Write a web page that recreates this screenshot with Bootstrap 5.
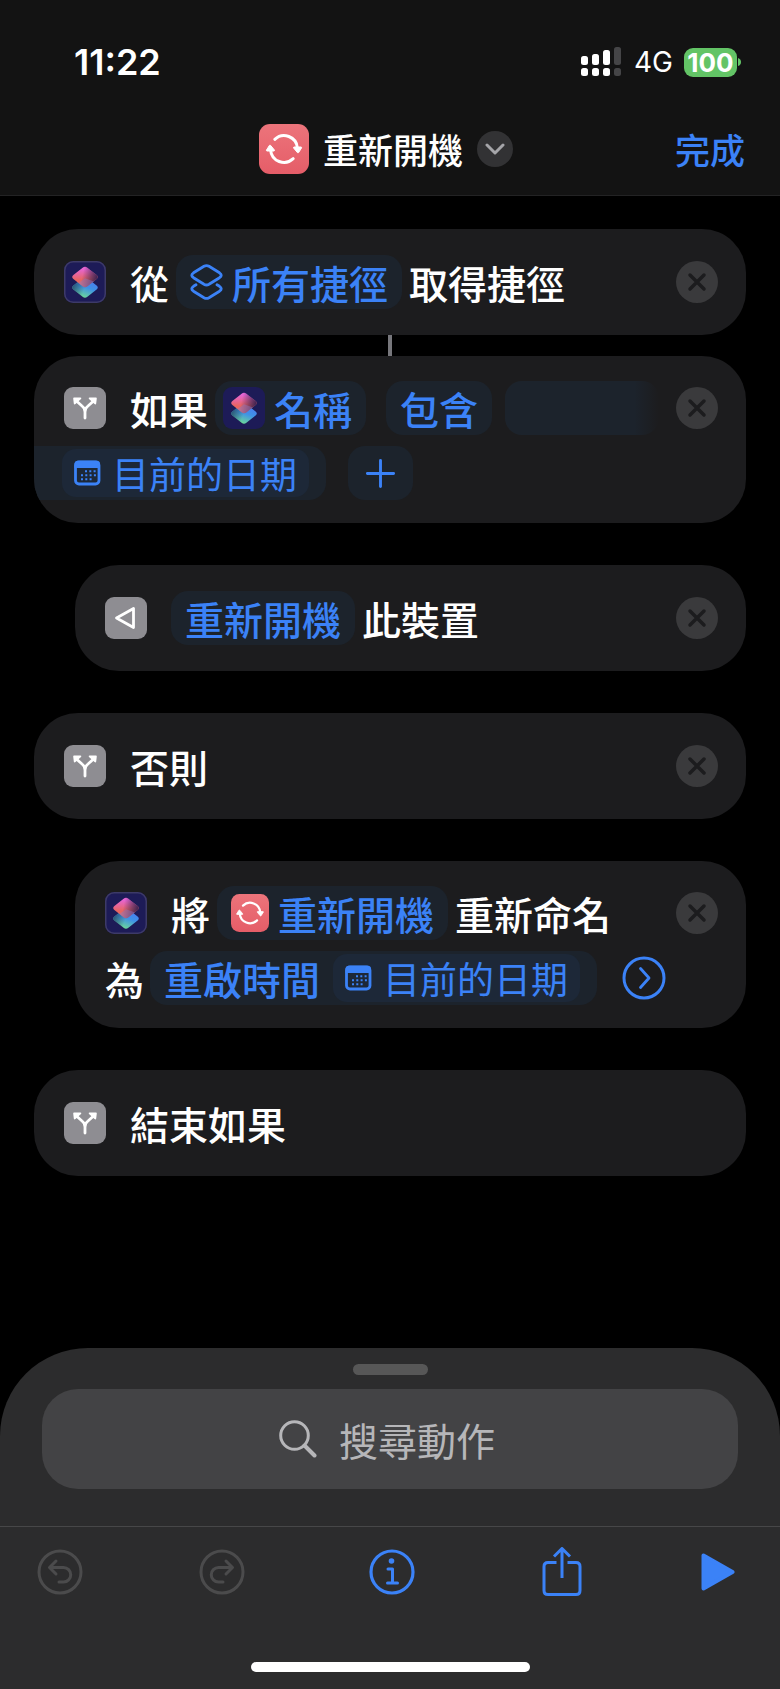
<!DOCTYPE html>
<html lang="zh-Hant" data-bs-theme="dark">
<head>
<meta charset="utf-8">
<meta name="viewport" content="width=device-width, initial-scale=1">
<title>重新開機</title>
<link href="https://cdn.jsdelivr.net/npm/bootstrap@5.3.0/dist/css/bootstrap.min.css" rel="stylesheet">
<style>
  :root { --blue: #3b82f7; --chip: #1c232c; --chip-inner: #1d2838; --block: #1c1c1e; }
  body { background: #000; color: #fff; font-family: "Noto Sans CJK TC", sans-serif; font-size: 39px; line-height: 54px; font-weight: 500; }
  button { font: inherit; color: inherit; background: none; border: 0; padding: 0; }
  svg { display: block; flex: none; }
  .top-area { background: #131313; border-bottom: 1px solid #232324; }
  .status-row { padding: 40px 39px 0 74px; height: 84px; font-family: Inter, sans-serif; }
  .clock { font-size: 36px; font-weight: 600; line-height: 44px; }
  .carrier { font-size: 28px; line-height: 44px; font-weight: 400; margin: 0 11px; }
  .battery { background: #63c466; border-radius: 9px; width: 53px; height: 29px; line-height: 29px; font-size: 26px; font-weight: 700; text-align: center; }
  .title-row { grid-template-columns: 1fr auto 1fr; padding: 40px 35px 21px; }
  .title-group { gap: 14px; }
  .title-row h1, .done { font-size: 35px; line-height: 50px; font-weight: 500; }
  .done { color: var(--blue); text-decoration: none; }
  .chevron { width: 36px; height: 36px; background: #323234; }
  .flow { padding: 33px 34px 40px; }
  .block { background: var(--block); border-radius: 44px; min-height: 106px; padding: 25px 28px 23px 30px; display: flex; flex-direction: column; justify-content: center; gap: 11px; overflow: hidden; }
  .block.single { padding-bottom: 25px; }
  .block + .block { margin-top: 42px; }
  .nested { margin-left: 41px; }
  .line { display: flex; align-items: center; height: 54px; white-space: nowrap; }
  .kind { margin-right: 24px; }
  .connector { width: 4px; height: 21px; background: #77777c; margin: 0 auto; }
  .chip { display: flex; align-items: center; height: 54px; background: var(--chip); color: var(--blue); border-radius: 17px; padding: 0 14px; margin: 0 7px; gap: 9px; }
  .chip.with-app { padding: 0 14px 0 8px; }
  .chip.flush { margin-left: 0; }
  .chip.operator { margin-left: 13px; }
  .chip.blank { flex: 1; margin: 0 17px 0 6px; background: linear-gradient(90deg, var(--chip) 84%, var(--block)); }
  .chip.cut { margin: 0 15px 0 -30px; border-radius: 0 17px 17px 0; padding: 0 17px 0 28px; }
  .chip.mixed { margin: 0 25px 0 6px; padding: 0 17px 0 14px; gap: 13px; }
  .date { display: flex; align-items: center; height: 48px; border-radius: 14px; background: var(--chip-inner); font-size: 37px; line-height: 48px; font-weight: 400; padding: 0 12px 0 11px; gap: 11px; }
  .sheet { background: #2c2c2d; border-radius: 88px 88px 0 0; }
  .grabber { width: 75px; height: 11px; border-radius: 6px; background: #575757; margin: 16px auto 14px; }
  .search { height: 100px; margin: 0 42px 37px; border-radius: 36px; background: #434345; color: #b6b6b9; gap: 22px; }
  .search input { width: 162px; height: 60px; background: none; border: 0; padding: 0; color: inherit; font-weight: 400; outline: 0; }
  .search input::placeholder { color: #b6b6b9; opacity: 1; }
  .tools { border-top: 1px solid #474748; height: 91px; padding: 0 45px 0 37px; color: var(--blue); }
  .tools button:disabled { color: #4b4b4c; }
  .info { padding: 0 8px; }
  .home-bar { width: 279px; height: 10px; border-radius: 5px; background: #fff; margin: 45px auto 17px; }
</style>
</head>
<body>
<svg width="0" height="0" class="position-absolute" aria-hidden="true">
  <defs>
    <linearGradient id="redFill" x1="0" y1="0" x2="0" y2="1"><stop offset="0" stop-color="#ec747b"/><stop offset="1" stop-color="#e55d68"/></linearGradient>
    <linearGradient id="topA" x1=".35" y1="0" x2=".35" y2="1"><stop offset=".1" stop-color="#e665d4"/><stop offset=".65" stop-color="#e8655f"/><stop offset="1" stop-color="#e0706a"/></linearGradient>
    <linearGradient id="topB" x1=".4" y1=".4" x2="1" y2=".5"><stop offset="0" stop-color="#3a2150" stop-opacity="0"/><stop offset="1" stop-color="#3a2150"/></linearGradient>
    <linearGradient id="botA" x1=".75" y1=".1" x2=".35" y2="1"><stop offset="0" stop-color="#4a7af0"/><stop offset=".45" stop-color="#3f92e6"/><stop offset="1" stop-color="#6fdd92"/></linearGradient>
    <linearGradient id="botB" x1="0" y1=".35" x2=".5" y2=".5"><stop offset="0" stop-color="#28506e"/><stop offset="1" stop-color="#28506e" stop-opacity="0"/></linearGradient>
    <path id="gem" d="M-2.4-9.2Q0-11.2 2.4-9.2L11.6-2Q14 0 11.6 2L2.4 9.2Q0 11.2-2.4 9.2L-11.6 2Q-14 0-11.6-2Z"/>
    <symbol id="app" viewBox="0 0 42 42">
      <rect width="42" height="42" rx="9" fill="#1d1b57"/>
      <g transform="translate(21 26.500)"><use href="#gem" fill="url(#botA)"/><use href="#gem" fill="url(#botB)"/></g>
      <g transform="translate(21 16)"><use href="#gem" fill="url(#topA)"/><use href="#gem" fill="url(#topB)"/></g>
      <path d="M21 17.300 30 20.500 23.300 25.200Q21 27 18.700 25.200L14.500 22Z" fill="#8a78c8" opacity=".45"/>
    </symbol>
    <symbol id="appFramed" viewBox="0 0 42 42">
      <use href="#app"/><rect x=".75" y=".75" width="40.500" height="40.500" rx="8.500" fill="none" stroke="#3d3a68" stroke-width="1.500"/>
    </symbol>
    <symbol id="branch" viewBox="0 0 42 42">
      <rect width="42" height="42" rx="9" fill="#8e8d92"/>
      <path d="M21 31V25C21 22 20 20.500 18 19L13 14.500M21 25C21 22 22 20.500 24 19L29 14.500" fill="none" stroke="#fff" stroke-width="2.800" stroke-linecap="round"/>
      <path d="M10 10.500H16.500Q18 10.800 17 12L11.500 17Q10 18 9.800 16.500L9.200 11.500Q9.200 10.500 10 10.500ZM32 10.500H25.500Q24 10.800 25 12L30.500 17Q32 18 32.200 16.500L32.800 11.500Q32.800 10.500 32 10.500Z" fill="#fff"/>
    </symbol>
    <symbol id="cycle" viewBox="0 0 50 50">
      <rect width="50" height="50" rx="11" fill="url(#redFill)"/>
      <path d="M15.800 15.300A13.400 13.400 0 0 1 38.400 24M34.200 34.700A13.400 13.400 0 0 1 11.600 26" fill="none" stroke="#fff" stroke-width="3" stroke-linecap="round"/>
      <path d="M35 23H42Q43 23.200 42.500 24L39.600 28.600Q39 29.300 38.400 28.600L34.600 24Q34.200 23.200 35 23ZM15 27H8Q7 26.800 7.500 26L10.400 21.400Q11 20.700 11.600 21.400L15.400 26Q15.800 26.800 15 27Z" fill="#fff" stroke="#fff"/>
    </symbol>
    <symbol id="close" viewBox="0 0 42 42">
      <circle cx="21" cy="21" r="21" fill="#3a3a3c"/><path d="M14 14 28 28M28 14 14 28" stroke="#1c1c1e" stroke-width="3.500" stroke-linecap="round"/>
    </symbol>
    <symbol id="calendar" viewBox="0 0 28 26">
      <rect x="2.500" y="2" width="23.500" height="22" rx="3.500" fill="none" stroke="currentColor" stroke-width="2.800"/>
      <path d="M1.500 8V4Q1.500.8 5 .8H23.500Q27 .8 27 4V8Z" fill="currentColor"/>
      <path d="M12 11.200H23M8 15.200H23M8 19.200H19" stroke="currentColor" stroke-width="2" stroke-dasharray="2 2.300"/>
    </symbol>
    <symbol id="stack" viewBox="0 0 33 36">
      <g fill="none" stroke="currentColor" stroke-width="2.800" stroke-linejoin="round" stroke-linecap="round">
        <path d="M14 2.300Q16.500.9 19 2.300L29.500 8.800Q33 11.200 29.500 13.700L19 20.300Q16.500 21.700 14 20.300L3.500 13.700Q0 11.200 3.500 8.800Z"/>
        <path d="M6 20.800 3.500 22.300Q0 24.700 3.500 27.200L14 33.700Q16.500 35.100 19 33.700L29.500 27.200Q33 24.700 29.500 22.300L27 20.800"/>
      </g>
    </symbol>
  </defs>
</svg>

<div class="d-flex flex-column min-vh-100">
  <header class="top-area">
    <div class="status-row d-flex justify-content-between align-items-center">
      <span class="clock">11:22</span>
      <div class="d-flex align-items-center">
        <svg width="42" height="30" viewBox="0 0 42 30" aria-hidden="true">
          <g fill="#fff"><rect x="0" y="9" width="7" height="9" rx="2.500"/><rect x="11" y="7" width="7" height="11" rx="2.500"/><rect x="22" y="3" width="7" height="15" rx="2.500"/><rect x="0" y="21" width="7" height="8" rx="2.500"/><rect x="11" y="21" width="7" height="8" rx="2.500"/><rect x="22" y="21" width="7" height="8" rx="2.500"/></g>
          <g fill="#454547"><rect x="33" y="0" width="7" height="18" rx="2.500"/><rect x="33" y="21" width="7" height="8" rx="2.500"/></g>
        </svg>
        <span class="carrier">4G</span>
        <span class="battery">100</span>
        <svg width="4" height="8" viewBox="0 0 4 8" aria-hidden="true"><path d="M1 0Q4 1 4 4T1 8Z" fill="#63c466"/></svg>
      </div>
    </div>
    <div class="title-row d-grid align-items-center">
      <span></span>
      <div class="title-group d-flex align-items-center me-2">
        <svg width="50" height="50" aria-hidden="true"><use href="#cycle"/></svg>
        <h1 class="mb-0">重新開機</h1>
        <button class="chevron rounded-circle d-flex align-items-center justify-content-center" aria-label="選單">
          <svg width="20" height="12" viewBox="0 0 20 12"><path d="M2 2 10 10 18 2" fill="none" stroke="#a5a5a9" stroke-width="3" stroke-linecap="round" stroke-linejoin="round"/></svg>
        </button>
      </div>
      <a href="#" class="done text-end">完成</a>
    </div>
  </header>

  <main class="flow">
    <section class="block single">
      <div class="line">
        <svg class="kind" width="42" height="42" aria-hidden="true"><use href="#appFramed"/></svg>
        <span>從</span>
        <button class="chip"><svg width="33" height="36" aria-hidden="true"><use href="#stack"/></svg>所有捷徑</button>
        <span>取得捷徑</span>
        <button class="ms-auto" aria-label="移除"><svg width="42" height="42"><use href="#close"/></svg></button>
      </div>
    </section>
    <div class="connector"></div>
    <section class="block">
      <div class="line">
        <svg class="kind" width="42" height="42" aria-hidden="true"><use href="#branch"/></svg>
        <span>如果</span>
        <button class="chip with-app"><svg width="42" height="42" aria-hidden="true"><use href="#app"/></svg>名稱</button>
        <button class="chip operator">包含</button>
        <button class="chip blank" aria-label="值"></button>
        <button aria-label="移除"><svg width="42" height="42"><use href="#close"/></svg></button>
      </div>
      <div class="line">
        <button class="chip cut"><span class="date"><svg width="28" height="26" aria-hidden="true"><use href="#calendar"/></svg>目前的日期</span></button>
        <button class="chip px-3" aria-label="加入"><svg width="33" height="33" viewBox="0 0 34 34"><path d="M17 3.500V30.500M3.500 17H30.500" stroke="currentColor" stroke-width="3" stroke-linecap="round"/></svg></button>
      </div>
    </section>
    <section class="block single nested">
      <div class="line">
        <svg class="kind" width="42" height="42" viewBox="0 0 42 42" aria-hidden="true"><rect width="42" height="42" rx="9" fill="#8e8d92"/><path d="M28.500 11.500V30.500L11.500 21Z" fill="none" stroke="#fff" stroke-width="2.800" stroke-linejoin="round"/></svg>
        <button class="chip flush">重新開機</button>
        <span>此裝置</span>
        <button class="ms-auto" aria-label="移除"><svg width="42" height="42"><use href="#close"/></svg></button>
      </div>
    </section>
    <section class="block single">
      <div class="line">
        <svg class="kind" width="42" height="42" aria-hidden="true"><use href="#branch"/></svg>
        <span>否則</span>
        <button class="ms-auto" aria-label="移除"><svg width="42" height="42"><use href="#close"/></svg></button>
      </div>
    </section>
    <section class="block nested">
      <div class="line">
        <svg class="kind" width="42" height="42" aria-hidden="true"><use href="#appFramed"/></svg>
        <span>將</span>
        <button class="chip"><svg width="38" height="38" aria-hidden="true"><use href="#cycle"/></svg>重新開機</button>
        <span>重新命名</span>
        <button class="ms-auto" aria-label="移除"><svg width="42" height="42"><use href="#close"/></svg></button>
      </div>
      <div class="line">
        <span>為</span>
        <button class="chip mixed">重啟時間<span class="date"><svg width="28" height="26" aria-hidden="true"><use href="#calendar"/></svg>目前的日期</span></button>
        <button aria-label="顯示更多"><svg width="44" height="44" viewBox="0 0 44 44"><circle cx="22" cy="22" r="20" fill="none" stroke="#3b82f7" stroke-width="3"/><path d="M18.500 12.500 27 22 18.500 31.500" fill="none" stroke="#3b82f7" stroke-width="2.800" stroke-linecap="round" stroke-linejoin="round"/></svg></button>
      </div>
    </section>
    <section class="block single">
      <div class="line">
        <svg class="kind" width="42" height="42" aria-hidden="true"><use href="#branch"/></svg>
        <span>結束如果</span>
      </div>
    </section>
  </main>

  <footer class="sheet mt-auto overflow-hidden">
    <div class="grabber"></div>
    <label class="search d-flex align-items-center justify-content-center">
      <svg width="38" height="38" viewBox="0 0 38 38" aria-hidden="true"><circle cx="15.500" cy="15.500" r="13.800" fill="none" stroke="currentColor" stroke-width="3"/><path d="M25.500 25.500 35.500 35.500" stroke="currentColor" stroke-width="4" stroke-linecap="round"/></svg>
      <input type="text" placeholder="搜尋動作" aria-label="搜尋動作">
    </label>
    <div class="tools d-flex align-items-center justify-content-between">
      <button disabled aria-label="還原"><svg width="46" height="46" viewBox="0 0 46 46"><g fill="none" stroke="currentColor" stroke-width="3" stroke-linecap="round" stroke-linejoin="round"><circle cx="23" cy="23" r="21"/><path d="M19 12 12.500 18.500 19 25M13 18.500H26.500A7 7 0 0 1 26.500 33H22"/></g></svg></button>
      <button disabled aria-label="重做"><svg width="46" height="46" viewBox="0 0 46 46"><g fill="none" stroke="currentColor" stroke-width="3" stroke-linecap="round" stroke-linejoin="round"><circle cx="23" cy="23" r="21"/><path d="M27 12 33.500 18.500 27 25M33 18.500H19.500A7 7 0 0 0 19.500 33H24"/></g></svg></button>
      <button class="info" aria-label="資訊"><svg width="46" height="46" viewBox="0 0 46 46"><circle cx="23" cy="23" r="21" fill="none" stroke="currentColor" stroke-width="3.200"/><circle cx="22.500" cy="12" r="2.800" fill="currentColor"/><path d="M19 20H23.500V34M18.500 34H28.500" fill="none" stroke="currentColor" stroke-width="3" stroke-linecap="round" stroke-linejoin="round"/></svg></button>
      <button aria-label="分享"><svg width="46" height="50" viewBox="0 0 46 50"><path d="M17.500 15.500H9Q5 15.500 5 19.500V43.500Q5 47.500 9 47.500H37Q41 47.500 41 43.500V19.500Q41 15.500 37 15.500H28.500M23 31V1.500M15 9.500 23 1.500 31 9.500" fill="none" stroke="currentColor" stroke-width="3" stroke-linejoin="round"/></svg></button>
      <button aria-label="執行"><svg width="34" height="38" viewBox="0 0 34 38"><path d="M2.500 2.500V35.500L31.500 19Z" fill="currentColor" stroke="currentColor" stroke-width="4" stroke-linejoin="round"/></svg></button>
    </div>
    <div class="home-bar"></div>
  </footer>
</div>
<script src="https://cdn.jsdelivr.net/npm/bootstrap@5.3.0/dist/js/bootstrap.bundle.min.js"></script>
</body>
</html>
